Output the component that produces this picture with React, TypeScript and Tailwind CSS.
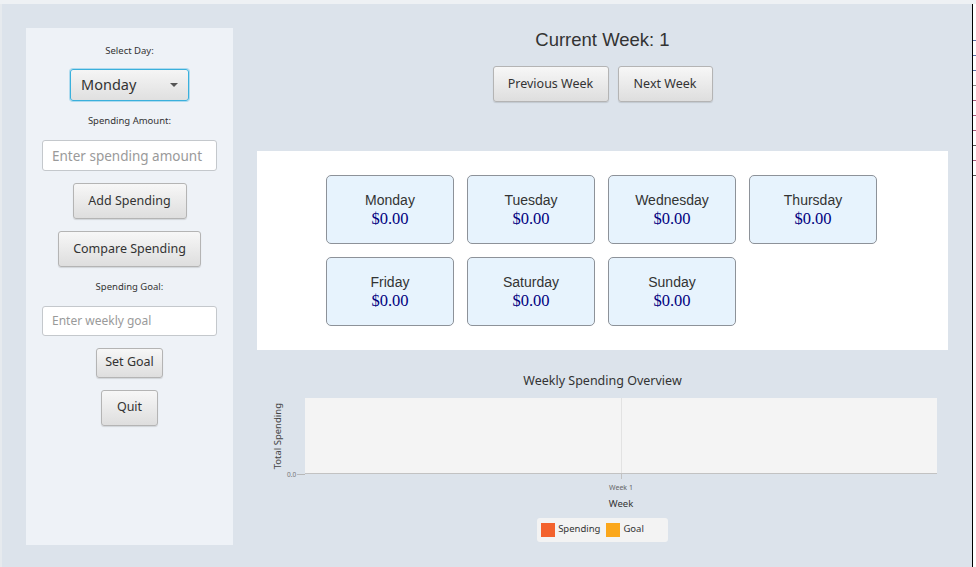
import clsx from "clsx";

const days = ["Monday", "Tuesday", "Wednesday", "Thursday", "Friday", "Saturday", "Sunday"];

const fxFont = "font-['Noto_Sans',sans-serif]";

function FxButton({ className = "", children }: { className?: string; children: React.ReactNode }) {
  return (
    <button
      className={clsx(
        "flex items-center justify-center rounded-[3px] border border-[#b4b4b4] bg-gradient-to-b from-[#f7f7f7] to-[#dedede] text-[12.5px] text-[#333] shadow-[0_1px_1px_rgba(0,0,0,0.12)]",
        fxFont,
        className
      )}
    >
      {children}
    </button>
  );
}

function FieldLabel({ children }: { children: React.ReactNode }) {
  return <div className={clsx("text-[9.5px] leading-none text-[#333]", fxFont)}>{children}</div>;
}

function FxInput({ placeholder, className = "" }: { placeholder: string; className?: string }) {
  return (
    <input
      placeholder={placeholder}
      className={clsx(
        "w-[175px] rounded-[3px] border border-[#c4c8cc] bg-white px-[9px] text-[#333] placeholder:text-[#9a9a9a] outline-none",
        fxFont,
        className
      )}
    />
  );
}

function Sidebar() {
  return (
    <div className="flex h-[517px] w-[207px] flex-col items-center bg-[#eef2f7] pt-[18px]">
      <FieldLabel>Select Day:</FieldLabel>
      <div className="mt-[13px] flex h-[32px] w-[119px] items-center justify-between rounded-[3px] border border-[#3ab0dc] bg-gradient-to-b from-[#f5f5f5] to-[#e0e0e0] pl-[10px] pr-[10px] shadow-[0_0_0_1px_rgba(58,176,220,0.35)]">
        <span className={clsx("text-[14.5px] text-[#333]", fxFont)}>Monday</span>
        <span className="h-0 w-0 border-x-[4px] border-t-[4px] border-x-transparent border-t-[#555]" />
      </div>
      <div className="mt-[15px]">
        <FieldLabel>Spending Amount:</FieldLabel>
      </div>
      <FxInput placeholder="Enter spending amount" className="mt-[15px] h-[31px] text-[13.5px]" />
      <FxButton className="mt-[12px] h-[36px] w-[114px]">Add Spending</FxButton>
      <FxButton className="mt-[12px] h-[36px] w-[143px]">Compare Spending</FxButton>
      <div className="mt-[15px]">
        <FieldLabel>Spending Goal:</FieldLabel>
      </div>
      <FxInput placeholder="Enter weekly goal" className="mt-[14px] h-[30px] text-[12px]" />
      <FxButton className="mt-[12px] h-[30px] w-[67px]">Set Goal</FxButton>
      <FxButton className="mt-[12px] h-[36px] w-[57px]">Quit</FxButton>
    </div>
  );
}

function DayCard({ day }: { day: string }) {
  return (
    <div className="flex h-[69px] w-[128px] flex-col items-center justify-center rounded-[5px] border border-[#8d9299] bg-[#e7f3fd]">
      <span className="font-['Liberation_Sans',Arial,sans-serif] text-[14px] leading-[17px] text-[#333]">{day}</span>
      <span className="font-['Liberation_Serif','Times_New_Roman',serif] text-[16.5px] leading-[19px] text-[#000080]">
        $0.00
      </span>
    </div>
  );
}

function Chart() {
  return (
    <div className={clsx("flex flex-col items-center", fxFont)}>
      <div className="mt-[23px] text-[12.5px] leading-[16px] text-[#333]">Weekly Spending Overview</div>
      <div className="mt-[9px] flex w-full">
        <div className="flex w-[48px] items-stretch">
          <div className="flex w-[25px] items-center justify-end">
            <span className="rotate-180 text-[9.5px] leading-none text-[#444] [writing-mode:vertical-rl]">
              Total Spending
            </span>
          </div>
          <div className="flex flex-1 flex-col justify-end">
            <div className="flex translate-y-[4px] items-center">
              <span className="ml-[5px] text-[6.5px] leading-none text-[#777]">0.0</span>
              <span className="ml-[1px] h-px flex-1 bg-[#b8b8b8]" />
            </div>
          </div>
        </div>
        <div className="mr-[11px] flex h-[76px] flex-1 justify-center border-b border-[#c2c2c2] bg-[#f4f4f4]">
          <div className="w-px bg-[#e2e2e2]" />
        </div>
      </div>
      <div className="flex w-full">
        <div className="w-[48px]" />
        <div className="mr-[11px] flex flex-1 flex-col items-center">
          <div className="h-[5px] w-px bg-[#c2c2c2]" />
          <span className="mt-[5px] text-[7px] leading-none text-[#666]">Week 1</span>
          <span className="mt-[8px] text-[9.5px] leading-none text-[#333]">Week</span>
        </div>
      </div>
      <div className="mt-[9px] flex h-[24px] items-center gap-[3px] rounded-[3px] bg-[#f3f3f3] px-[4px] pr-[24px] text-[9.5px] text-[#333]">
        <span className="h-[14px] w-[14px] bg-[#f3622d]" />
        <span className="mr-[3px]">Spending</span>
        <span className="h-[14px] w-[14px] bg-[#fba71b]" />
        <span>Goal</span>
      </div>
    </div>
  );
}

export default function App() {
  return (
    <div className="flex h-[567px] w-[976px] flex-col overflow-hidden bg-[#dce3eb]">
      <div className="h-[4px] bg-[#eef1f4]" />
      <div className="flex flex-1">
        <div className="w-[2px] bg-[#e6eaee]" />
        <div className="flex w-[970px] pl-[24px] pt-[24px]">
          <Sidebar />
          <div className="ml-[24px] flex w-[691px] flex-col">
            <div className="flex flex-col items-center">
              <h1 className="mt-[1px] font-['Liberation_Sans',Arial,sans-serif] text-[18.5px] leading-[22px] text-[#333]">
                Current Week: 1
              </h1>
              <div className="mt-[15px] flex gap-[9px]">
                <FxButton className="h-[36px] w-[116px]">Previous Week</FxButton>
                <FxButton className="h-[36px] w-[95px]">Next Week</FxButton>
              </div>
            </div>
            <div className="mt-[49px] flex h-[199px] justify-center bg-white pt-[24px]">
              <div className="grid h-fit grid-cols-[repeat(4,128px)] gap-[13px] pr-[2px]">
                {days.map((d) => (
                  <DayCard key={d} day={d} />
                ))}
              </div>
            </div>
            <Chart />
          </div>
        </div>
        <div className="w-px bg-black" />
        <div className="flex w-[3px] flex-col gap-[14px] bg-white pt-[36px]">
          <div className="h-px bg-[#5b6fa6]" />
          <div className="h-px bg-[#5b6fa6]" />
          <div className="h-px bg-[#5b6fa6]" />
          <div className="h-px bg-[#8a8a8a]" />
          <div className="h-px bg-[#a55b7e]" />
          <div className="h-px bg-[#a55b7e]" />
          <div className="h-px bg-[#a55b7e]" />
          <div className="h-px bg-[#555]" />
          <div className="h-px bg-[#a55b7e]" />
          <div className="h-px bg-[#555]" />
        </div>
      </div>
    </div>
  );
}
